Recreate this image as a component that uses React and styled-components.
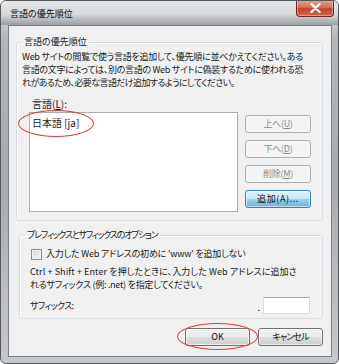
import React from 'react';
import styled, { createGlobalStyle } from 'styled-components';

const Global = createGlobalStyle`
  body {
    margin: 0;
    background: #fff;
  }
  * {
    box-sizing: border-box;
  }
`;

const FONT = `"Noto Sans CJK JP", "Noto Sans", sans-serif`;

function App() {
  return (
    <>
      <Global />
      <Window>
        <TitleBar>
          <Title>言語の優先順位</Title>
          <CloseButton aria-label="close">
            <svg width="11" height="10" viewBox="0 0 11 10">
              <path d="M1.5 1 L9.5 9 M9.5 1 L1.5 9" stroke="#fff" strokeWidth="2.4" strokeLinecap="round" />
            </svg>
          </CloseButton>
        </TitleBar>
        <Client>
          <Group>
            <Legend>言語の優先順位</Legend>
            <Description>
              <Line $ls={-0.26}>Web サイトの閲覧で使う言語を追加して、優先順に並べかえてください。ある</Line>
              <Line $ls={-0.3}>言語の文字によっては、別の言語の Web サイトに偽装するために使われる恐</Line>
              <Line $ls={-0.6}>れがあるため、必要な言語だけ追加するようにしてください。</Line>
            </Description>
            <FieldLabel>
              言語(<u>L</u>):
            </FieldLabel>
            <ListRow>
              <ListBox>
                <ListItem>日本語 [ja]</ListItem>
                <Mark $left={-12} $top={-3} $width={76} $height={27} />
              </ListBox>
              <ButtonColumn>
                <Button disabled>
                  上へ(<u>U</u>)
                </Button>
                <Button disabled>
                  下へ(<u>D</u>)
                </Button>
                <Button disabled>
                  削除(<u>M</u>)
                </Button>
                <Button $focused>
                  <Line $ls={0.6}>追加(A)...</Line>
                </Button>
              </ButtonColumn>
            </ListRow>
          </Group>
          <Group $second>
            <Legend $ls={-1.25}>プレフィックスとサフィックスのオプション</Legend>
            <CheckRow>
              <CheckBox />
              <Line $ls={-0.2}>入力した Web アドレスの初めに 'www' を追加しない</Line>
            </CheckRow>
            <Note>
              <Line $ls={0.1}>Ctrl + Shift + Enter を押したときに、入力した Web アドレスに追加さ</Line>
              <Line $ls={-0.27}>れるサフィックス (例: .net) を指定してください。</Line>
            </Note>
            <SuffixRow>
              <Line $ls={-0.7}>サフィックス:</Line>
              <Dot>.</Dot>
              <TextBox />
            </SuffixRow>
          </Group>
          <Footer>
            <MarkWrap>
              <Button $wide>OK</Button>
              <Mark $left={-8} $top={-5} $width={81} $height={27} />
            </MarkWrap>
            <Button $wide>
              <Line $ls={-0.9}>キャンセル</Line>
            </Button>
          </Footer>
        </Client>
      </Window>
    </>
  );
}

export default App;

const Window = styled.div`
  width: 339px;
  height: 364px;
  display: flex;
  flex-direction: column;
  border: 1px solid #55595d;
  border-radius: 6px;
  background: linear-gradient(to bottom, #dfe1e3 0%, #b4b7ba 10%, #a9acaf 50%, #c6c8ca 100%);
  font-family: ${FONT};
  color: #1a1a1a;
  overflow: hidden;
`;

const TitleBar = styled.div`
  height: 24px;
  display: flex;
  align-items: flex-start;
  padding-left: 9px;
  background: linear-gradient(to bottom, #e6e7e8 0%, #d6d8da 55%, #9c9fa2 100%);
`;

const Title = styled.div`
  font-size: 9px;
  line-height: 12px;
  margin-top: 7px;
  color: #111;
  font-feature-settings: 'palt';
`;

const CloseButton = styled.div`
  margin-left: auto;
  margin-right: 4px;
  margin-top: -1px;
  width: 38px;
  height: 17px;
  display: flex;
  align-items: center;
  justify-content: center;
  border: 1px solid #6b2a22;
  border-top: none;
  border-radius: 0 0 4px 4px;
  background: linear-gradient(to bottom, #e8a293 0%, #d5715c 45%, #c4432b 55%, #d4664b 100%);
  box-shadow: inset 0 0 0 1px rgba(255, 255, 255, 0.35);
`;

const Client = styled.div`
  flex: 1;
  margin: 0 6px 6px 7px;
  border: 1px solid #7b8085;
  background: #f0f0f0;
  padding: 9px 8px 0 7px;
  display: flex;
  flex-direction: column;
`;

const Text = `
  font-size: 9px;
  font-feature-settings: 'palt';
`;

const Line = styled.span`
  display: block;
  white-space: nowrap;
  letter-spacing: ${(p) => p.$ls || 0}px;
`;

const Group = styled.fieldset`
  margin: ${(p) => (p.$second ? '7px 0 0 3px' : '0')};
  padding: 0 5px ${(p) => (p.$second ? '4px' : '8px')} 5px;
  border: 1px solid #d5dfe5;
  border-radius: 3px;
  box-shadow: inset 1px 1px 0 #fff;
  min-width: 0;
`;

const Legend = styled.legend`
  ${Text}
  padding: 0 2px;
  margin-left: 0;
  line-height: 14px;
  letter-spacing: ${(p) => p.$ls || 0}px;
  white-space: nowrap;
`;

const Description = styled.div`
  ${Text}
  margin-top: 1px;
  line-height: 13px;
`;

const FieldLabel = styled.div`
  ${Text}
  font-size: 10px;
  margin: 8px 0 0 10px;
  line-height: 13px;
`;

const ListRow = styled.div`
  display: flex;
  gap: 7px;
  margin: 2px 0 0 7px;
`;

const ListBox = styled.div`
  position: relative;
  width: 209px;
  height: 100px;
  border: 1px solid #abadb3;
  background: #fff;
  padding: 3px 0 0 2px;
`;

const ListItem = styled.div`
  ${Text}
  font-size: 10px;
  line-height: 14px;
`;

const ButtonColumn = styled.div`
  display: flex;
  flex-direction: column;
  gap: 7px;
  padding-top: 3px;
`;

const Button = styled.button`
  ${Text}
  width: ${(p) => (p.$wide ? '65px' : '66px')};
  height: 18px;
  padding: 0;
  display: flex;
  align-items: center;
  justify-content: center;
  font-family: ${FONT};
  line-height: 14px;
  color: #111;
  border-radius: 3px;
  border: 1px solid ${(p) => (p.$focused ? '#3c7fb1' : '#707070')};
  background: ${(p) =>
    p.$focused
      ? 'linear-gradient(to bottom, #e5f4fc 0%, #c4e5f6 50%, #98d1ef 51%, #68b3db 100%)'
      : 'linear-gradient(to bottom, #f2f2f2 0%, #ebebeb 50%, #dddddd 51%, #cfcfcf 100%)'};
  box-shadow: inset 0 0 0 1px rgba(255, 255, 255, 0.6);
  &:disabled {
    color: #8d8d8d;
    border-color: #adb2b5;
    background: #f4f4f4;
    box-shadow: none;
    letter-spacing: -0.3px;
  }
`;

const CheckRow = styled.div`
  ${Text}
  display: flex;
  align-items: center;
  gap: 4px;
  margin: 5px 0 0 6px;
  line-height: 14px;
`;

const CheckBox = styled.span`
  width: 11px;
  height: 11px;
  border: 1px solid #8e8f8f;
  background: linear-gradient(135deg, #d8d8d8 0%, #f4f4f4 100%);
  box-shadow: inset 0 0 0 1px #f4f4f4;
`;

const Note = styled.div`
  ${Text}
  margin: 4px 0 0 5px;
  line-height: 13px;
`;

const SuffixRow = styled.div`
  ${Text}
  display: flex;
  align-items: center;
  margin: 6px 7px 0 5px;
`;

const Dot = styled.span`
  margin-left: auto;
  margin-right: 3px;
  align-self: flex-end;
  line-height: 12px;
`;

const TextBox = styled.div`
  width: 47px;
  height: 17px;
  border: 1px solid #d8dde2;
  border-top-color: #abadb3;
  background: #fff;
`;

const Footer = styled.div`
  display: flex;
  justify-content: flex-end;
  gap: 8px;
  margin-top: 9px;
`;

const MarkWrap = styled.div`
  position: relative;
`;

const Mark = styled.span`
  position: absolute;
  left: ${(p) => p.$left}px;
  top: ${(p) => p.$top}px;
  width: ${(p) => p.$width}px;
  height: ${(p) => p.$height}px;
  border: 1px solid #e23a3a;
  border-radius: 50%;
  pointer-events: none;
`;
